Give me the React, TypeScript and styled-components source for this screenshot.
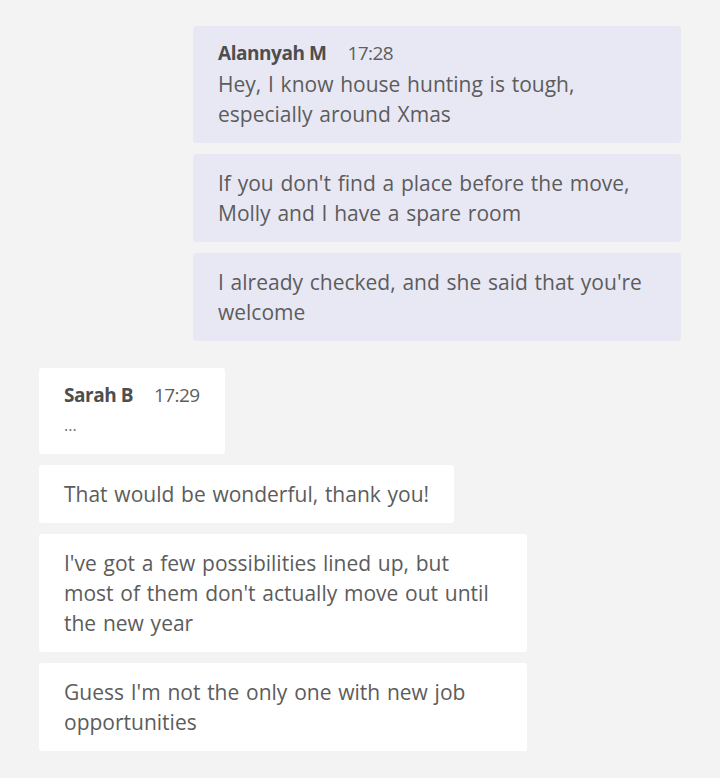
import React from 'react';
import styled, { createGlobalStyle } from 'styled-components';

const GlobalStyle = createGlobalStyle`
  html, body {
    margin: 0;
    padding: 0;
    background: #f3f3f3;
  }
  body {
    font-family: 'Open Sans', 'Noto Sans', sans-serif;
  }
`;

export const ChatContainer = styled.div`
  display: flex;
  flex-direction: column;
  padding: 26px 39px 20px;
  min-height: 778px;
  box-sizing: border-box;
`;

export const Group = styled.div<{ mine?: boolean }>`
  display: flex;
  flex-direction: column;
  align-items: ${(p) => (p.mine ? 'flex-end' : 'flex-start')};
  gap: 11px;
  margin-bottom: 27px;
`;

export const Bubble = styled.div<{ mine?: boolean }>`
  box-sizing: border-box;
  max-width: 488px;
  width: fit-content;
  padding: 14px 25px 14px;
  border-radius: 3px;
  background: ${(p) => (p.mine ? '#e8e8f5' : '#ffffff')};
  color: #5c5c5c;
  font-size: 21px;
  line-height: 30px;
  word-spacing: 1.3px;
`;

export const Meta = styled.div`
  display: flex;
  gap: 21px;
  line-height: 26px;
  margin-bottom: 3px;
  font-size: 19px;
  word-spacing: 0;
`;

export const Name = styled.span`
  font-weight: 700;
  color: #4e4e4e;
  letter-spacing: -0.45px;
`;

export const Time = styled.span`
  color: #5e5e5e;
  letter-spacing: -0.6px;
`;

export const Typing = styled.div`
  font-size: 16px;
  color: #707070;
  line-height: 29px;
`;

const groups = [
  {
    mine: true,
    name: 'Alannyah M',
    time: '17:28',
    messages: [
      'Hey, I know house hunting is tough, especially around Xmas',
      "If you don't find a place before the move, Molly and I have a spare room",
      "I already checked, and she said that you're welcome",
    ],
  },
  {
    mine: false,
    name: 'Sarah B',
    time: '17:29',
    messages: [
      '...',
      'That would be wonderful, thank you!',
      "I've got a few possibilities lined up, but most of them don't actually move out until the new year",
      "Guess I'm not the only one with new job opportunities",
    ],
  },
];

const App = () => {
  return (
    <>
      <GlobalStyle />
      <ChatContainer>
        {groups.map((g) => (
          <Group mine={g.mine} key={g.name}>
            {g.messages.map((m, i) => (
              <Bubble mine={g.mine} key={i}>
                {i === 0 && (
                  <Meta>
                    <Name>{g.name}</Name>
                    <Time>{g.time}</Time>
                  </Meta>
                )}
                {m === '...' ? <Typing>...</Typing> : m}
              </Bubble>
            ))}
          </Group>
        ))}
      </ChatContainer>
    </>
  );
};

export default App;
